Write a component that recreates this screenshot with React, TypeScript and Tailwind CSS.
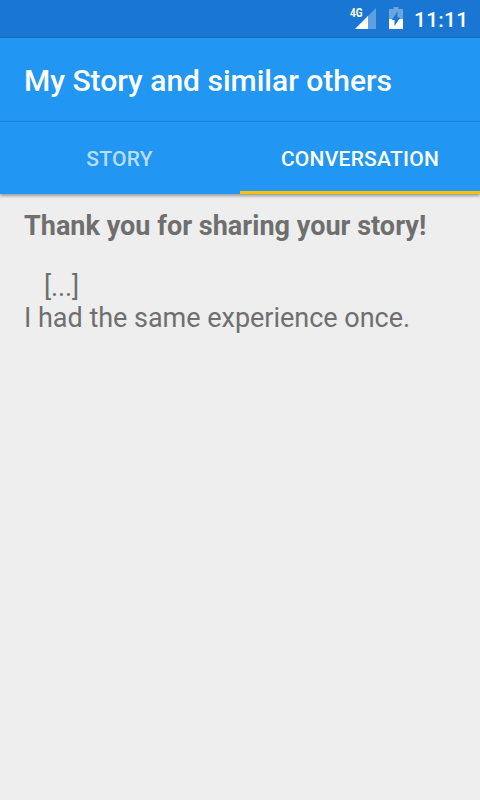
function SignalIcon() {
  return (
    <svg className="h-[22px] w-[27px] overflow-visible" viewBox="0 0 27 22" fill="white">
      <text x="0" y="10" fontSize="12.5" fontWeight="700" fontFamily="'Roboto', sans-serif" textLength="12.5" lengthAdjust="spacingAndGlyphs">4G</text>
      <path d="M26 1V22H5Z" opacity=".3" />
      <path d="M18 9V22H5Z" />
    </svg>
  );
}

function BatteryIcon() {
  return (
    <svg className="h-[22px] w-[14px]" viewBox="0 0 14 22">
      <path d="M4.5 0H9.5V2H14V12H0V2H4.5Z" fill="white" opacity=".35" />
      <path d="M0 12H14V22H0Z" fill="white" />
      <path d="M8.5 4.5V10.5H11.3L5.5 19V13H2.7Z" fill="#1976d2" />
    </svg>
  );
}

function StatusBar() {
  return (
    <div className="flex h-[38px] items-start bg-[#1976d2] pl-[350px] text-white shadow-[inset_0_-2px_1px_-1px_rgba(0,0,0,0.13)]">
      <div className="mt-[7px] flex w-[64px] gap-3">
        <SignalIcon />
        <BatteryIcon />
      </div>
      <span className="mt-[7px] text-[21px] leading-[26px] font-medium tracking-[0.2px]">11:11</span>
    </div>
  );
}

export default function App() {
  return (
    <div className="flex h-[800px] w-[480px] flex-col overflow-hidden bg-[#eeeeee] font-['Roboto',sans-serif]">
      <StatusBar />
      <header className="flex h-[84px] items-center bg-[#2196f3] px-6 text-[30px] font-medium whitespace-nowrap text-white shadow-[inset_0_-2px_1px_-1px_rgba(0,0,0,0.13)]">
        <h1>My Story and similar others</h1>
      </header>
      <nav className="z-10 grid h-[72px] grid-cols-2 bg-[#2196f3] text-[21px] font-medium tracking-[0.25px] text-white shadow-[0_2px_3px_rgba(0,0,0,0.35)]">
        <button className="flex items-center justify-center pt-[4px] pr-px text-white/70">STORY</button>
        <button className="flex items-center justify-center border-b-[3px] border-[#ffc107] pt-[7px]">CONVERSATION</button>
      </nav>
      <main className="px-6 pt-[17px] text-[27px] leading-[31px] whitespace-pre text-[#6f6f6f]">
        <p className="font-bold tracking-[0.02px]">Thank you for sharing your story!</p>
        <p className="mt-[30px] pl-[20px] tracking-[-0.1px]">[...]</p>
        <p className="tracking-[-0.02px]">I had the same experience once.</p>
      </main>
    </div>
  );
}
